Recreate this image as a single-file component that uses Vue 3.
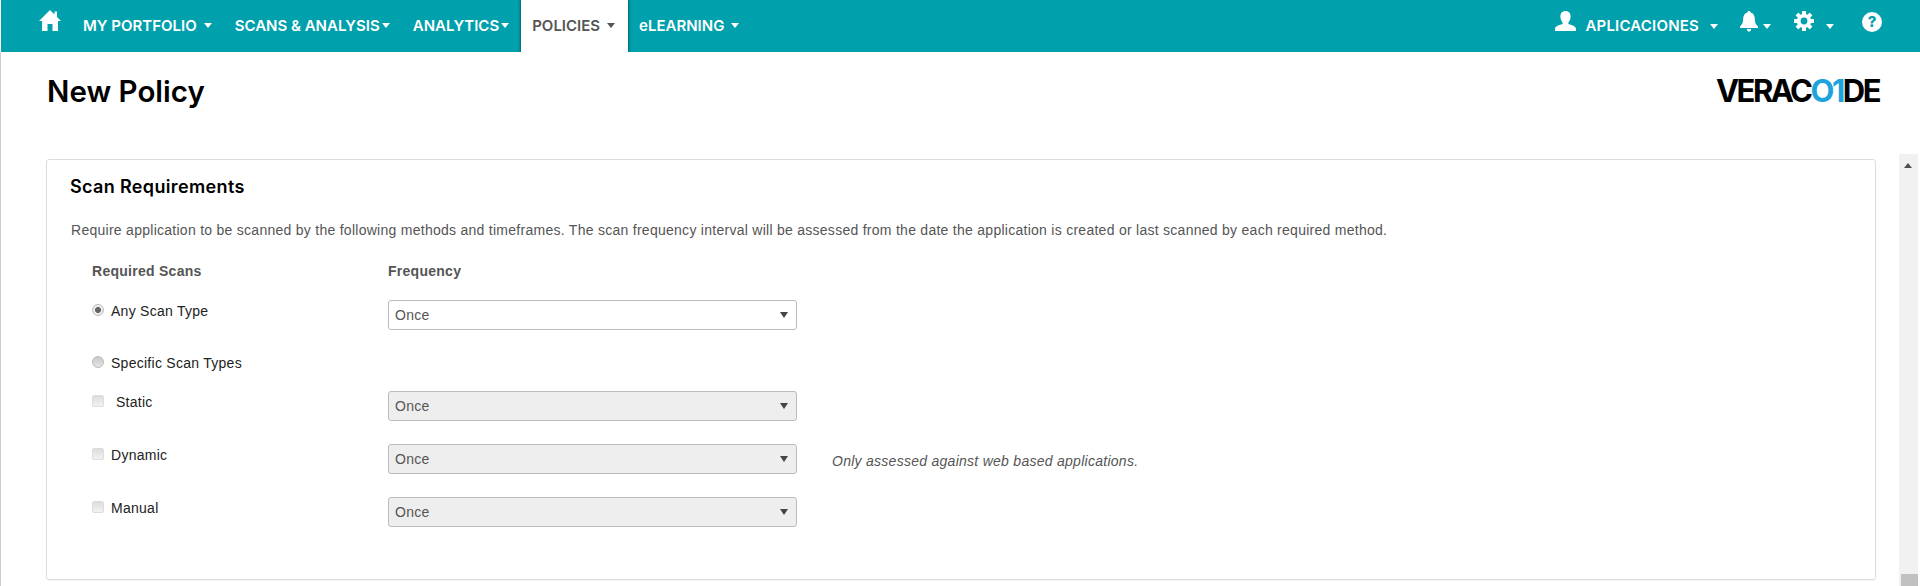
<script setup>
const menu = [
  { label: 'MY PORTFOLIO', gap: 'wide' },
  { label: 'SCANS & ANALYSIS', gap: 'tight' },
  { label: 'ANALYTICS', gap: 'tight' },
  { label: 'POLICIES', gap: 'wide', active: true },
  { label: 'eLEARNING', gap: 'wide' }
]

const scanRows = [
  { id: 'static', label: 'Static', indent: true },
  { id: 'dynamic', label: 'Dynamic', hint: 'Only assessed against web based applications.' },
  { id: 'manual', label: 'Manual' }
]

const gearTeeth = [0, 45, 90, 135, 180, 225, 270, 315]
</script>

<template>
  <div class="page">
    <nav class="topnav">
      <a class="home" href="#" aria-label="Home">
        <svg width="22" height="21" viewBox="0 0 22 21">
          <path d="M11 0 L15.5 4.4 V1.5 H18 V6.9 L22 11 H19 V21 H13.5 V14 H8.5 V21 H3 V11 H0 Z" fill="#fff" />
        </svg>
      </a>
      <ul class="menu">
        <li v-for="item in menu" :key="item.label" :class="['menu-item', { active: item.active }]">
          {{ item.label }}<span :class="['caret', item.gap]"></span>
        </li>
      </ul>
      <div class="tools">
        <svg class="user-icon" width="21" height="20" viewBox="0 0 21 20">
          <path d="M10.5 0 C14 0 15.6 2.4 15.6 5.6 C15.6 8.2 14.6 10.2 13.4 11.4 V13 C16.6 14.2 21 15 21 18 V20 H0 V18 C0 15 4.4 14.2 7.6 13 V11.4 C6.4 10.2 5.4 8.2 5.4 5.6 C5.4 2.4 7 0 10.5 0 Z" fill="#fff" />
        </svg>
        <span class="account">APLICACIONES</span>
        <span class="caret account-caret"></span>
        <svg class="bell-icon" width="18" height="21" viewBox="0 0 18 21">
          <path d="M9 0 C10 0 10.6 .7 10.6 1.6 C13.4 2.3 14.8 4.6 14.8 7.6 C14.8 12 16 13.6 18 15.6 V17 H0 V15.6 C2 13.6 3.2 12 3.2 7.6 C3.2 4.6 4.6 2.3 7.4 1.6 C7.4 .7 8 0 9 0 Z M6.8 18 H11.2 C11 19.6 10.2 20.6 9 20.6 C7.8 20.6 7 19.6 6.8 18 Z" fill="#fff" />
        </svg>
        <span class="caret bell-caret"></span>
        <svg class="gear-icon" width="20" height="20" viewBox="0 0 20 20">
          <rect v-for="angle in gearTeeth" :key="angle" x="8" y="0" width="4" height="5" rx="0.6" fill="#fff" :transform="`rotate(${angle} 10 10)`" />
          <circle cx="10" cy="10" r="5.3" fill="none" stroke="#fff" stroke-width="3.8" />
        </svg>
        <span class="caret gear-caret"></span>
        <span class="help">?</span>
      </div>
    </nav>

    <div class="body">
      <main class="content">
        <header class="page-head">
          <h1>New Policy</h1>
          <div class="logo">VERAC<span class="logo-blue">O1</span>DE</div>
        </header>

        <section class="panel">
          <h2>Scan Requirements</h2>
          <p class="intro">Require application to be scanned by the following methods and timeframes. The scan frequency interval will be assessed from the date the application is created or last scanned by each required method.</p>

          <div class="col-heads">
            <span>Required Scans</span>
            <span>Frequency</span>
          </div>

          <div class="row row-any">
            <label class="choice">
              <input type="radio" name="scan" checked />
              <span>Any Scan Type</span>
            </label>
            <div class="select-wrap">
              <select><option>Once</option></select>
            </div>
          </div>

          <div class="row row-specific">
            <label class="choice">
              <input type="radio" name="scan" />
              <span>Specific Scan Types</span>
            </label>
          </div>

          <div v-for="scan in scanRows" :key="scan.id" :class="['row', 'row-scan', scan.id]">
            <label class="choice">
              <input type="checkbox" disabled />
              <span :class="{ indent: scan.indent }">{{ scan.label }}</span>
            </label>
            <div class="select-wrap">
              <select disabled><option>Once</option></select>
            </div>
            <em v-if="scan.hint" class="hint">{{ scan.hint }}</em>
          </div>
        </section>
      </main>

      <aside class="scrollbar">
        <span class="arrow"></span>
        <span class="thumb"></span>
      </aside>
    </div>
  </div>
</template>

<style>
html,
body {
  margin: 0;
  background: #fff;
  overflow: hidden;
}
</style>

<style scoped>
.page {
  height: 586px;
  overflow: hidden;
  font-family: 'Liberation Sans', Arial, sans-serif;
  font-size: 14px;
  letter-spacing: 0.27px;
  color: #333;
}

.topnav {
  display: flex;
  align-items: stretch;
  height: 52px;
  margin-left: 1px;
  padding-left: 27px;
  background: #00a0ac;
  font-family: Inter, 'Noto Sans', sans-serif;
  font-size: 15px;
  font-weight: 600;
  letter-spacing: 0;
  color: #fff;
}

.home {
  display: flex;
  padding: 10px 11px 0;
}

.menu {
  display: flex;
  margin: 0;
  padding: 0;
  list-style: none;
}

.menu-item {
  display: flex;
  align-items: center;
  padding: 0 12px 0 11px;
  height: 50px;
  white-space: nowrap;
}

.menu-item.active {
  height: 52px;
  padding: 0 13px 2px 11px;
  box-sizing: border-box;
  background: #fff;
  color: #555;
  box-shadow: 0 0 3px rgba(0, 0, 0, 0.7);
  clip-path: inset(0 -4px 0 -4px);
}

.caret {
  display: inline-block;
  width: 0;
  height: 0;
  border-left: 4.5px solid transparent;
  border-right: 4.5px solid transparent;
  border-top: 5px solid currentColor;
}

.caret.wide {
  margin-left: 7px;
}

.caret.tight {
  margin-left: 2px;
}

.tools {
  display: flex;
  align-items: flex-start;
  margin-left: auto;
  padding-right: 38px;
}

.user-icon {
  margin-top: 11px;
}

.account {
  margin: 16px 0 0 9px;
  letter-spacing: 0.2px;
}

.account-caret {
  margin: 24px 0 0 11px;
}

.bell-icon {
  margin: 11px 0 0 22px;
}

.bell-caret {
  margin: 24px 0 0 5px;
}

.gear-icon {
  margin: 11px 0 0 23px;
}

.gear-caret {
  margin: 24px 0 0 12px;
}

.help {
  width: 20px;
  height: 20px;
  margin: 12px 0 0 28px;
  border-radius: 50%;
  background: #fff;
  color: #00a0ac;
  font-size: 15px;
  font-weight: 800;
  line-height: 20px;
  text-align: center;
}

.body {
  display: flex;
  height: 534px;
  border-left: 1px solid #ccc;
}

.content {
  flex: 1;
  padding: 0 23px 0 45px;
}

.page-head {
  display: flex;
  justify-content: space-between;
  height: 107px;
}

h1 {
  margin: 19px 0 0 1px;
  font-family: Inter, 'Noto Sans', sans-serif;
  font-size: 29.5px;
  font-weight: 600;
  line-height: 40px;
  letter-spacing: 0;
  color: #000;
}

.logo {
  margin: 17px -3px 0 0;
  font-family: Inter, 'Noto Sans', sans-serif;
  font-size: 31px;
  font-weight: 700;
  line-height: 44px;
  letter-spacing: -2.5px;
  color: #000;
}

.logo-blue {
  color: #1fa3dc;
}

.panel {
  box-sizing: border-box;
  height: 421px;
  padding: 0 23px;
  border: 1px solid #ddd;
  border-radius: 3px;
  box-shadow: 0 1px 1px rgba(0, 0, 0, 0.05);
}

h2 {
  margin: 14px 0 0;
  font-family: Inter, 'Noto Sans', sans-serif;
  font-size: 18px;
  font-weight: 600;
  line-height: 26px;
  letter-spacing: 0.35px;
  color: #000;
}

.intro {
  margin: 20px 0 0 1px;
  line-height: 20px;
  color: #555;
}

.col-heads {
  display: grid;
  grid-template-columns: 296px 1fr;
  margin: 21px 0 0 22px;
  font-weight: 700;
  line-height: 20px;
  color: #555;
}

.row {
  display: flex;
  align-items: flex-start;
  margin-left: 22px;
}

.choice {
  display: flex;
  align-items: center;
  gap: 7px;
  width: 296px;
  height: 20px;
  color: #222;
}

.choice input {
  appearance: none;
  flex: none;
  width: 12px;
  height: 12px;
  margin: 0 0 3px;
  border: 1px solid #bbb;
  background: linear-gradient(#c9c9c9, #e4e4e4);
}

.choice input[type='radio'] {
  border-radius: 50%;
}

.choice input[type='radio']:checked {
  background: radial-gradient(circle, #666 0 2.6px, #eee 3.4px);
}

.choice input[type='checkbox'] {
  border-color: #ddd;
  border-radius: 2px;
  background: linear-gradient(#ddd, #f2f2f2);
}

.indent {
  margin-left: 5px;
}

.select-wrap {
  position: relative;
  width: 409px;
}

.select-wrap::after {
  content: '';
  position: absolute;
  top: 12px;
  right: 9px;
  border-left: 4px solid transparent;
  border-right: 4px solid transparent;
  border-top: 6px solid #444;
}

select {
  appearance: none;
  display: block;
  box-sizing: border-box;
  width: 100%;
  height: 30px;
  padding: 0 6px;
  border: 1px solid #bbb;
  border-radius: 3px;
  background: #fff;
  font-family: 'Liberation Sans', Arial, sans-serif;
  font-size: 14px;
  letter-spacing: 0.27px;
  color: #555;
  opacity: 1;
}

select:disabled {
  background: #eee;
}

.hint {
  margin: 7px 0 0 35px;
  line-height: 20px;
  color: #555;
}

.row-any {
  margin-top: 19px;
}

.row-any .choice {
  margin-top: 1px;
}

.row-specific {
  margin-top: 23px;
  height: 20px;
}

.row-scan .choice {
  margin-top: 1px;
}

.static {
  margin-top: 18px;
}

.dynamic {
  margin-top: 23px;
}

.manual {
  margin-top: 23px;
}

.scrollbar {
  position: relative;
  flex: none;
  box-sizing: border-box;
  width: 19px;
  margin: 102px 2px 0 0;
  background: #f1f1f1;
}

.arrow {
  position: absolute;
  top: 9px;
  left: 5px;
  border-left: 4.5px solid transparent;
  border-right: 4.5px solid transparent;
  border-bottom: 5px solid #505050;
}

.thumb {
  position: absolute;
  top: 420px;
  left: 2px;
  width: 17px;
  height: 20px;
  background: #c1c1c1;
}
</style>
